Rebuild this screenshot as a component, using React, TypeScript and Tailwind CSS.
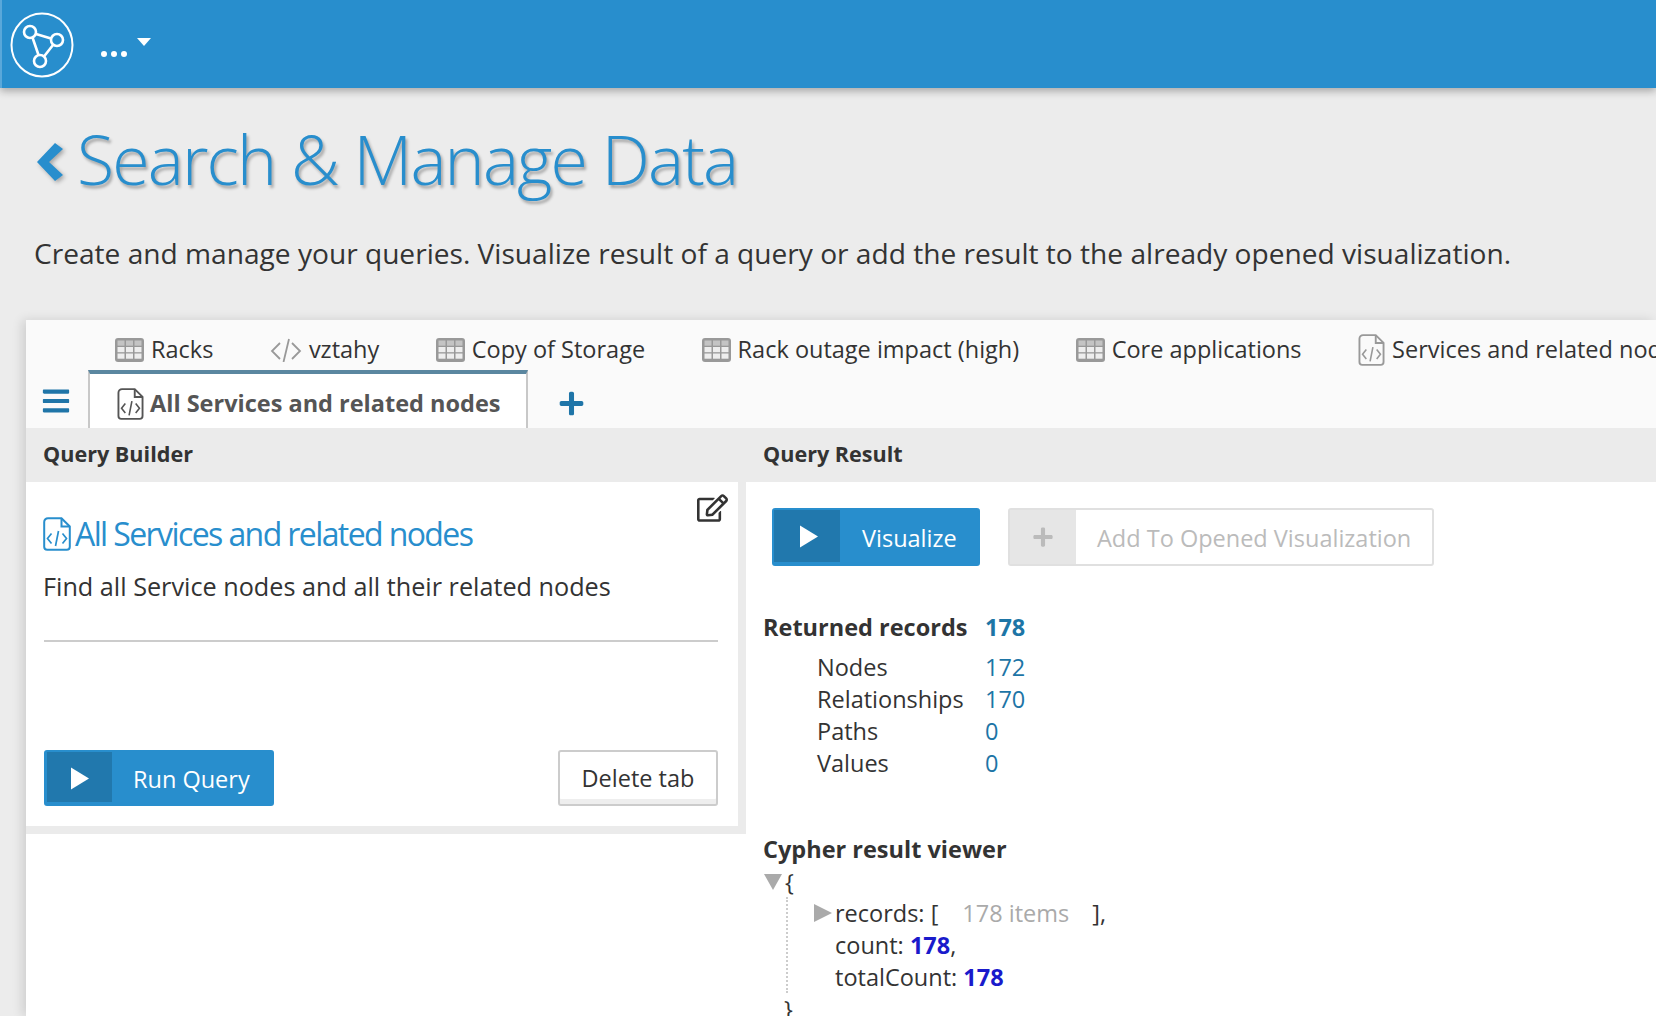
import { FaBars, FaPlus, FaRegEdit } from "react-icons/fa";

function FileCode({ className }: { className?: string }) {
  return (
    <svg viewBox="0 0 28 34" fill="none" stroke="currentColor" className={className}>
      <path d="M5 1.2H18.5L26.8 9.5V29.8A3 3 0 0 1 23.8 32.8H4.2A3 3 0 0 1 1.2 29.8V5A3.8 3.8 0 0 1 5 1.2Z" strokeWidth="2" />
      <path d="M18.5 1.2V9.5H26.8" strokeWidth="2" />
      <path d="M8.5 16.5L4.5 21.5L8.5 26.5M19.5 16.5L23.5 21.5L19.5 26.5M15.5 14L12.5 29" strokeWidth="1.7" />
    </svg>
  );
}

function Code({ className }: { className?: string }) {
  return (
    <svg viewBox="0 0 32 24" fill="none" stroke="currentColor" strokeWidth="1.8" className={className}>
      <path d="M10 5L2 13L10 21M22 5L30 13L22 21M19 1L13.5 24" />
    </svg>
  );
}

function Play({ className }: { className?: string }) {
  return (
    <svg viewBox="0 0 18 22" fill="currentColor" className={className}>
      <path d="M0 0L18 11L0 22Z" />
    </svg>
  );
}

function TableIcon() {
  const cols = [2.5, 11, 19.5];
  const rows = [2.5, 9, 15.5];
  return (
    <svg viewBox="0 0 29 24" className="h-[24px] w-[29px]">
      <rect x="0" y="0" width="29" height="24" rx="3" fill="#999999" />
      {rows.map((y, r) =>
        cols.map((x) => (
          <rect key={`${x}-${y}`} x={x} y={y} width="7" height="5.2" fill={r === 0 ? "#c4c4c4" : "#eeeeee"} />
        ))
      )}
    </svg>
  );
}

function Logo() {
  return (
    <svg viewBox="0 0 64 66" fill="none" stroke="white" strokeWidth="2.6" className="h-[66px] w-[64px]">
      <ellipse cx="32" cy="33" rx="30.5" ry="31.5" strokeWidth="2" />
      <circle cx="20" cy="20" r="6" />
      <circle cx="47" cy="28" r="6" />
      <circle cx="30" cy="49" r="6" />
      <path d="M26 22L41 26.5M22.5 25.5L28.5 43M43 33L34 44.5" />
    </svg>
  );
}

function Tab({ icon, label }: { icon: React.ReactNode; label: string }) {
  return (
    <div className="flex shrink-0 items-center gap-[7px] whitespace-nowrap">
      {icon}
      <span>{label}</span>
    </div>
  );
}

function Row({ k, v }: { k: string; v: string }) {
  return (
    <div className="flex h-[32px] items-center">
      <span className="w-[222px] pl-[54px]">{k}</span>
      <span className="text-[#1d75a6]">{v}</span>
    </div>
  );
}

export default function App() {
  return (
    <div className="flex h-[1016px] w-[1656px] flex-col overflow-hidden bg-[#ececec] font-['Open_Sans',sans-serif] text-[#333333]">
      <header className="z-10 flex h-[88px] shrink-0 items-start border-l-2 border-[#5aa8da] bg-[#288ecd] pl-[8px] pt-[12px] shadow-[0_3px_8px_rgba(0,0,0,0.3)]">
        <Logo />
        <div className="ml-[27px] mt-[39px] flex gap-[4px]">
          <span className="h-[6px] w-[6px] rounded-full bg-white" />
          <span className="h-[6px] w-[6px] rounded-full bg-white" />
          <span className="h-[6px] w-[6px] rounded-full bg-white" />
        </div>
        <div className="ml-[10px] mt-[26px] h-0 w-0 border-x-[7px] border-t-[8px] border-x-transparent border-t-white" />
      </header>

      <div className="flex h-[138px] shrink-0 items-center pl-[37px] pt-[4px] text-[#288ecd] [text-shadow:2px_3px_3px_rgba(0,0,0,0.3)]">
        <svg viewBox="0 0 26 38" fill="currentColor" className="mt-[5px] h-[38px] w-[26px] [filter:drop-shadow(2px_2px_2px_rgba(0,0,0,0.3))]">
          <path d="M18 0L26 6L12 19L26 32L18 38L0 19Z" />
        </svg>
        <h1 className="ml-[14px] text-[68px] font-light leading-none tracking-[-1.85px]">Search &amp; Manage Data</h1>
      </div>

      <p className="mt-[7px] h-[50px] shrink-0 pl-[34px] text-[28.12px] leading-[40px]">
        Create and manage your queries. Visualize result of a query or add the result to the already opened visualization.
      </p>

      <div className="ml-[26px] mt-[37px] flex min-h-0 flex-1 flex-col bg-white text-[23.5px] shadow-[-4px_0_10px_rgba(0,0,0,0.12)]">
        <div className="shrink-0 bg-[#fafafa]">
          <div className="flex h-[50px] items-center gap-[56.5px] pl-[89px] pt-[10px]">
            <Tab icon={<TableIcon />} label="Racks" />
            <Tab icon={<Code className="h-[24px] w-[32px] text-[#999999]" />} label="vztahy" />
            <Tab icon={<TableIcon />} label="Copy of Storage" />
            <Tab icon={<TableIcon />} label="Rack outage impact (high)" />
            <Tab icon={<TableIcon />} label="Core applications" />
            <Tab icon={<FileCode className="h-[32px] w-[27px] text-[#999999]" />} label="Services and related nodes" />
          </div>
          <div className="flex h-[58px] items-end">
            <FaBars className="mb-[12px] ml-[16px] h-[30px] w-[28px] text-[#1f75a8]" />
            <div className="ml-[18px] flex h-[58px] w-[440px] items-center gap-[6px] border-x-2 border-t-4 border-x-[#c8c8c8] border-t-[#5b87a0] bg-white pl-[27px] pt-[6px] font-bold text-[#555555]">
              <FileCode className="h-[32px] w-[27px] text-[#555555]" />
              <span>All Services and related nodes</span>
            </div>
            <FaPlus className="mb-[11px] ml-[30px] h-[27px] w-[27px] text-[#1f75a8]" />
          </div>
        </div>

        <div className="flex min-h-0 flex-1">
          <div className="w-[720px] shrink-0">
            <div className="border-b-[8px] border-r-[8px] border-[#ebebeb]">
              <div className="flex h-[54px] items-center bg-[#ebebeb] pb-[2px] pl-[17px] text-[21.6px] font-bold">Query Builder</div>
              <div className="relative h-[344px] bg-white pl-[18px] pr-[20px]">
                <FaRegEdit className="absolute right-[10px] top-[12px] h-[28px] w-[31px] text-[#333333]" />
                <div className="-ml-px flex items-center gap-[4px] pt-[30px] text-[#288ecd]">
                  <FileCode className="h-[34px] w-[28px]" />
                  <span className="text-[32px] leading-[44px] tracking-[-1.6px]">All Services and related nodes</span>
                </div>
                <p className="-ml-px mt-[10px] text-[25.23px] leading-[40px]">Find all Service nodes and all their related nodes</p>
                <div className="mt-[34px] h-[2px] bg-[#cccccc]" />
                <div className="mt-[108px] flex items-center justify-between">
                  <button className="flex h-[56px] w-[230px] rounded-[3px] border-2 border-b-4 border-l-[3px] border-[#288ecd] bg-[#288ecd] text-white">
                    <span className="flex h-full w-[65px] items-center justify-center bg-[#2178ad] pt-[2px]">
                      <Play className="h-[23px] w-[18px]" />
                    </span>
                    <span className="ml-[21px] self-center pt-[5px]">Run Query</span>
                  </button>
                  <button className="h-[56px] w-[160px] rounded-[3px] border-2 border-[#cccccc] bg-white pt-[2px] shadow-[inset_0_-5px_0_#eeeeee]">Delete tab</button>
                </div>
              </div>
            </div>
          </div>

          <div className="min-w-0 flex-1">
            <div className="flex h-[54px] items-center bg-[#ebebeb] pb-[2px] pl-[17px] text-[21.6px] font-bold">Query Result</div>
            <div className="pl-[17px] pt-[26px]">
              <div className="ml-[9px] flex gap-[28px]">
                <button className="flex h-[58px] w-[208px] rounded-[3px] border-2 border-b-4 border-[#288ecd] bg-[#288ecd] text-white">
                  <span className="flex h-full w-[66px] items-center justify-center bg-[#2178ad] pl-[3px]">
                    <Play className="h-[23px] w-[18px]" />
                  </span>
                  <span className="ml-[22px] self-center pt-[5px]">Visualize</span>
                </button>
                <button className="flex h-[58px] w-[426px] rounded-[3px] border-2 border-[#e0e0e0] bg-white text-[#bbbbbb]">
                  <span className="flex h-full w-[66px] items-center justify-center bg-[#e6e6e6]">
                    <FaPlus className="h-[22px] w-[22px]" />
                  </span>
                  <span className="ml-[21px] self-center pt-[3px]">Add To Opened Visualization</span>
                </button>
              </div>

              <div className="mt-[44px] flex h-[36px] items-center font-bold">
                <span className="w-[222px]">Returned records</span>
                <span className="text-[#1d75a6]">178</span>
              </div>
              <div className="mt-[6px] w-[400px]">
                <Row k="Nodes" v="172" />
                <Row k="Relationships" v="170" />
                <Row k="Paths" v="0" />
                <Row k="Values" v="0" />
              </div>

              <div className="mt-[51px] h-[35px] font-bold leading-[36px]">Cypher result viewer</div>
              <div className="leading-[32px]">
                <div className="flex h-[31px] items-center">
                  <div className="ml-[1px] h-0 w-0 border-x-[9px] border-t-[16px] border-x-transparent border-t-[#aaaaaa]" />
                  <span className="ml-[3px]">{"{"}</span>
                </div>
                <div className="ml-[23px] w-[420px] border-l-2 border-dotted border-[#cccccc] pl-[47px]">
                  <div className="relative whitespace-nowrap">
                    <div className="absolute left-[-21px] top-[7px] h-0 w-0 border-y-[9px] border-l-[18px] border-y-transparent border-l-[#aaaaaa]" />
                    records: [<span className="ml-[24px] text-[#aaaaaa]">178 items</span><span className="ml-[23px]">],</span>
                  </div>
                  <div>count: <b className="text-[#1a1acb]">178</b>,</div>
                  <div>totalCount: <b className="text-[#1a1acb]">178</b></div>
                </div>
                <div className="ml-[21px]">{"}"}</div>
              </div>
            </div>
          </div>
        </div>
      </div>
    </div>
  );
}
